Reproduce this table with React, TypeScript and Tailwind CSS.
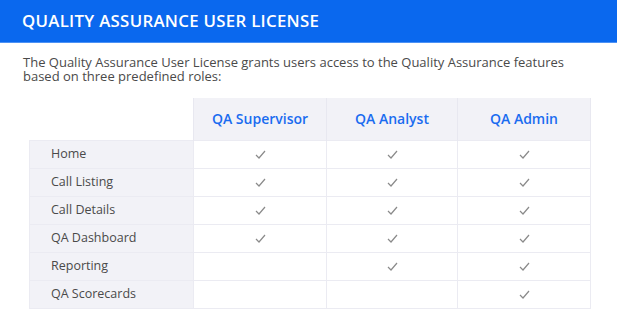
const roles = ['QA Supervisor', 'QA Analyst', 'QA Admin'];

const features: [string, boolean[]][] = [
  ['Home', [true, true, true]],
  ['Call Listing', [true, true, true]],
  ['Call Details', [true, true, true]],
  ['QA Dashboard', [true, true, true]],
  ['Reporting', [false, true, true]],
  ['QA Scorecards', [false, false, true]],
];

function Check() {
  return (
    <svg width="11" height="9" viewBox="0 0 11 9" className="mx-auto block">
      <path d="M1 5 L4 8 L10 1" fill="none" stroke="#8a8a8a" strokeWidth="1.2" />
    </svg>
  );
}

export default function App() {
  return (
    <div className="h-[329px] w-[617px] overflow-hidden bg-white [font-family:'Open_Sans',sans-serif]">
      <div className="flex h-[43px] items-center border-b border-[#4d92f5] bg-[#0a68ee] px-[22px]">
        <h1 className="text-[16.8px] font-semibold tracking-[0.3px] text-white">
          QUALITY ASSURANCE USER LICENSE
        </h1>
      </div>
      <p className="mt-[13px] px-[23px] text-[13px] leading-[13.5px] text-[#4a4a4a]">
        The Quality Assurance User License grants users access to the Quality Assurance features
        <br />
        based on three predefined roles:
      </p>
      <table className="ml-[29px] mt-[15px] w-[561px] table-fixed border-collapse text-[12.5px]">
        <colgroup>
          <col className="w-[164px]" />
          <col className="w-[133px]" />
          <col className="w-[131px]" />
          <col className="w-[133px]" />
        </colgroup>
        <thead>
          <tr className="h-[42px]">
            <th className="bg-white" />
            {roles.map((r) => (
              <th
                key={r}
                className="border-x border-[#e8e8f0] bg-[#f2f2f7] text-center text-[14px] font-semibold text-[#1a6cf0]"
              >
                {r}
              </th>
            ))}
          </tr>
        </thead>
        <tbody>
          {features.map(([name, has]) => (
            <tr key={name} className="h-[28px]">
              <td className="border border-[#ebebf2] bg-[#f2f2f7] pl-[21px] text-[#4a4a4a]">{name}</td>
              {has.map((h, i) => (
                <td key={i} className="border border-[#ebebf2] text-center">
                  {h ? <Check /> : null}
                </td>
              ))}
            </tr>
          ))}
        </tbody>
      </table>
    </div>
  );
}
